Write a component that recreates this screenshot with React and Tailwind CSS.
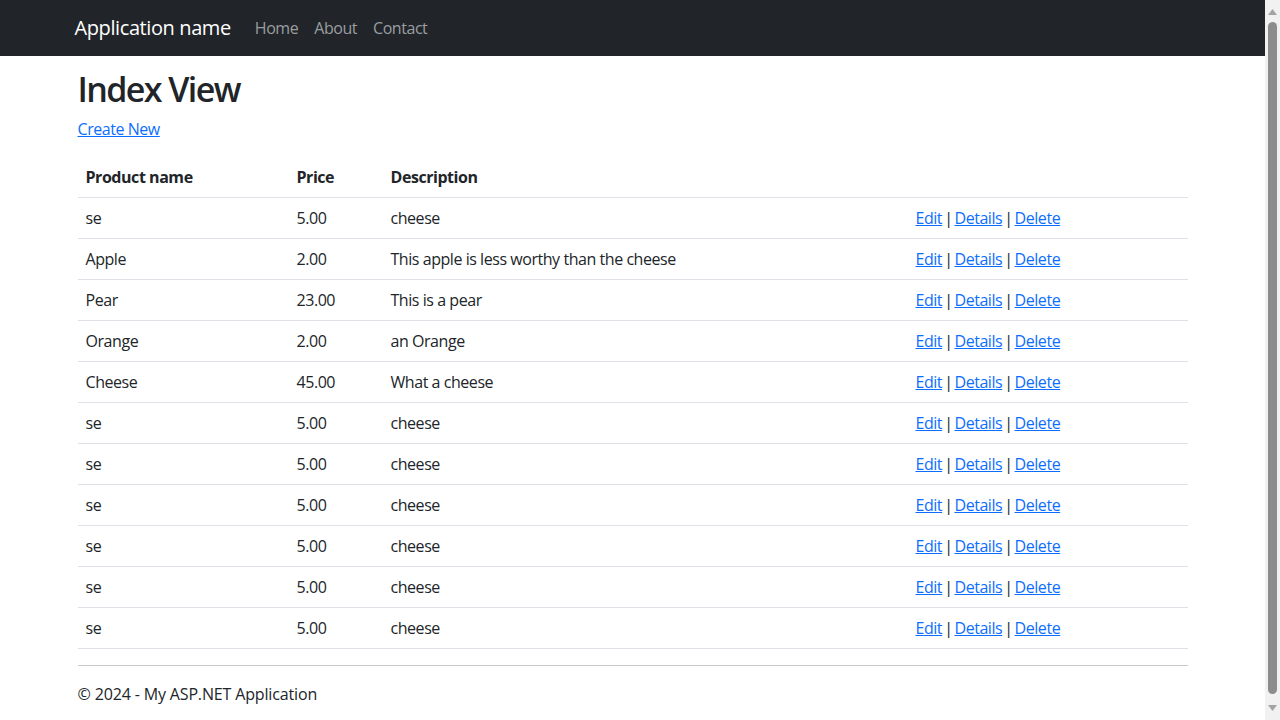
import React from 'react';

const products = [
  { name: 'se', price: '5.00', description: 'cheese' },
  { name: 'Apple', price: '2.00', description: 'This apple is less worthy than the cheese' },
  { name: 'Pear', price: '23.00', description: 'This is a pear' },
  { name: 'Orange', price: '2.00', description: 'an Orange' },
  { name: 'Cheese', price: '45.00', description: 'What a cheese' },
  { name: 'se', price: '5.00', description: 'cheese' },
  { name: 'se', price: '5.00', description: 'cheese' },
  { name: 'se', price: '5.00', description: 'cheese' },
  { name: 'se', price: '5.00', description: 'cheese' },
  { name: 'se', price: '5.00', description: 'cheese' },
  { name: 'se', price: '5.00', description: 'cheese' },
];

// Browser scrollbar as seen in the screenshot
const Scrollbar = () => (
  <div className="flex h-[720px] w-[15px] shrink-0 flex-col items-center bg-[#f1f1f1] pt-[9px] pb-[9px]">
    <svg width="9" height="6" viewBox="0 0 9 6">
      <path d="M4.5 0 L9 6 L0 6 Z" fill="#a3a3a3" />
    </svg>
    <div className="mt-[7px] w-[9px] flex-1 rounded-full bg-[#8c8c8c]"></div>
    <svg width="9" height="6" viewBox="0 0 9 6" className="mt-[11px]">
      <path d="M0 0 L9 0 L4.5 6 Z" fill="#a3a3a3" />
    </svg>
  </div>
);

const Sep = () => <span className="mx-[2px]">|</span>;

const App = () => {
  return (
    <div className="flex h-[720px] overflow-hidden bg-white font-['Open_Sans',sans-serif] text-[16px] leading-6 tracking-[-0.45px] text-[#212529]">
      <div className="w-[1265px] shrink-0">
        {/* Navbar */}
        <nav className="bg-[#212529] py-2">
          <div className="mx-auto flex w-[1140px] items-center px-3">
            <a href="#" className="mr-4 py-[5px] text-[20px] leading-[30px] tracking-[-0.4px] text-white">
              Application name
            </a>
            <ul className="flex">
              {['Home', 'About', 'Contact'].map((item) => (
                <li key={item}>
                  <a href="#" className="block px-2 py-2 text-[#9a9da0]">
                    {item}
                  </a>
                </li>
              ))}
            </ul>
          </div>
        </nav>

        {/* Body content */}
        <div className="mx-auto w-[1140px] px-[15px] pt-[13px]">
          <h1 className="mb-2 text-[34px] font-semibold leading-[40px] tracking-[-1.6px]">Index View</h1>
          <p className="mb-4">
            <a href="#" className="text-[#0d6efd] underline">Create New</a>
          </p>

          <table className="mb-4 w-full border-collapse text-left">
            <thead>
              <tr className="border-b border-[#dee2e6]">
                <th className="w-[211px] p-2 font-bold">Product name</th>
                <th className="w-[94px] p-2 font-bold">Price</th>
                <th className="w-[525px] p-2 font-bold">Description</th>
                <th className="p-2"></th>
              </tr>
            </thead>
            <tbody>
              {products.map((p, i) => (
                <tr key={i} className="border-b border-[#dee2e6]">
                  <td className="p-2">{p.name}</td>
                  <td className="p-2">{p.price}</td>
                  <td className="p-2">{p.description}</td>
                  <td className="p-2">
                    <a href="#" className="text-[#0d6efd] underline">Edit</a>
                    <Sep />
                    <a href="#" className="text-[#0d6efd] underline">Details</a>
                    <Sep />
                    <a href="#" className="text-[#0d6efd] underline">Delete</a>
                  </td>
                </tr>
              ))}
            </tbody>
          </table>

          <hr className="my-4 border-t border-[#c8c9ca]" />
          <footer>
            <p className="mb-4 tracking-[-0.15px]">© 2024 - My ASP.NET Application</p>
          </footer>
        </div>
      </div>
      <Scrollbar />
    </div>
  );
};

export default App;
